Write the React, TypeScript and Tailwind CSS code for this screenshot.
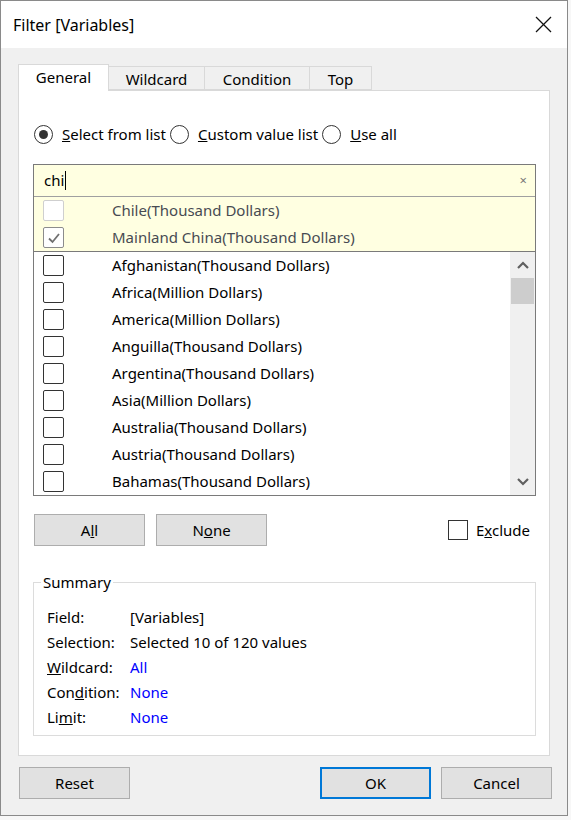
import React from 'react'

const font = { fontFamily: '"Noto Sans", "Segoe UI", sans-serif' }

const countries = [
  'Afghanistan(Thousand Dollars)',
  'Africa(Million Dollars)',
  'America(Million Dollars)',
  'Anguilla(Thousand Dollars)',
  'Argentina(Thousand Dollars)',
  'Asia(Million Dollars)',
  'Australia(Thousand Dollars)',
  'Austria(Thousand Dollars)',
  'Bahamas(Thousand Dollars)',
]

function Radio({ checked }: { checked?: boolean }) {
  return (
    <span className="w-[19px] h-[19px] rounded-full border border-[#333] bg-white flex items-center justify-center shrink-0">
      {checked && <span className="w-[9px] h-[9px] rounded-full bg-[#333]" />}
    </span>
  )
}

function Box({ tone = 'normal', checked }: { tone?: 'normal' | 'faint' | 'gray'; checked?: boolean }) {
  const border =
    tone === 'faint' ? 'border-[#cfcfcf]' : tone === 'gray' ? 'border-[#8c8c8c]' : 'border-[#333]'
  return (
    <span className={`w-[21px] h-[21px] rounded-[2px] border bg-white flex items-center justify-center shrink-0 ${border}`}>
      {checked && (
        <svg width="14" height="12" viewBox="0 0 14 12">
          <polyline points="2,6.5 5.5,10 12,2" fill="none" stroke="#707070" strokeWidth="1.8" />
        </svg>
      )}
    </span>
  )
}

function Btn({ children, primary, w = 'w-[111px]' }: { children: React.ReactNode; primary?: boolean; w?: string }) {
  return (
    <button
      className={`${w} h-[32px] bg-[#e1e1e1] text-[15px] text-black flex items-center justify-center ${
        primary ? 'border-2 border-[#0078d7]' : 'border border-[#adadad]'
      }`}
    >
      {children}
    </button>
  )
}

export default function App() {
  return (
    <div className="w-[571px] h-[820px] bg-[#f7f7f7] overflow-hidden" style={font}>
      <div className="w-[568px] h-[816px] border border-[#8a8a8a] bg-[#f0f0f0] flex flex-col text-black">

        {/* Title bar */}
        <div className="h-[47px] bg-white flex items-center justify-between pl-[12px] pr-[15px] shrink-0">
          <span className="text-[16px] leading-none">Filter [Variables]</span>
          <svg width="17" height="17" viewBox="0 0 17 17">
            <line x1="1" y1="1" x2="16" y2="16" stroke="#111" strokeWidth="1.2" />
            <line x1="16" y1="1" x2="1" y2="16" stroke="#111" strokeWidth="1.2" />
          </svg>
        </div>

        <div className="pl-[17px] pt-[16px] flex flex-col">
          {/* Tabs */}
          <div className="flex items-end h-[26px] relative z-10">
            <div className="w-[91px] h-[27px] bg-white border border-b-0 border-[#d9d9d9] flex items-center justify-center text-[15px] -mb-px pb-[1px]">
              General
            </div>
            <div className="w-[96px] h-[24px] bg-[#f0f0f0] border border-l-0 border-[#d9d9d9] flex items-center justify-center text-[15px] pt-[3px]">
              Wildcard
            </div>
            <div className="w-[105px] h-[24px] bg-[#f0f0f0] border border-l-0 border-[#d9d9d9] flex items-center justify-center text-[15px] pt-[3px]">
              Condition
            </div>
            <div className="w-[62px] h-[24px] bg-[#f0f0f0] border border-l-0 border-[#d9d9d9] flex items-center justify-center text-[15px] pt-[3px]">
              Top
            </div>
          </div>

          {/* Panel */}
          <div className="w-[532px] h-[666px] bg-white border border-[#d9d9d9] flex flex-col">
            {/* Radios */}
            <div className="flex items-center pl-[15px] mt-[34px] h-[19px] text-[15px]">
              <Radio checked />
              <span className="ml-[9px]"><span className="underline">S</span>elect from list</span>
              <span className="ml-[4px]"><Radio /></span>
              <span className="ml-[9px]"><span className="underline">C</span>ustom value list</span>
              <span className="ml-[4px]"><Radio /></span>
              <span className="ml-[9px]"><span className="underline">U</span>se all</span>
            </div>

            {/* List box */}
            <div className="ml-[14px] mt-[20px] w-[503px] h-[332px] border border-[#7a7a7a] flex flex-col overflow-hidden">
              <div className="h-[31px] bg-[#ffffe1] flex items-center justify-between pl-[10px] pr-[8px] shrink-0">
                <span className="text-[15px] flex items-center">chi<span className="w-px h-[19px] bg-black ml-px" /></span>
                <span className="text-[13px] text-[#777]">×</span>
              </div>
              <div className="border-t border-[#a0a0a0] bg-[#ffffe1] shrink-0">
                <div className="h-[27px] flex items-center">
                  <span className="w-[78px] pl-[9px]"><Box tone="faint" /></span>
                  <span className="text-[15px] text-[#474b52]">Chile(Thousand Dollars)</span>
                </div>
                <div className="h-[27px] flex items-center">
                  <span className="w-[78px] pl-[9px]"><Box tone="gray" checked /></span>
                  <span className="text-[15px] text-[#474b52]">Mainland China(Thousand Dollars)</span>
                </div>
              </div>
              <div className="border-t border-[#7a7a7a] flex flex-1 min-h-0">
                <div className="flex-1 overflow-hidden">
                  {countries.map((c) => (
                    <div key={c} className="h-[27px] flex items-center">
                      <span className="w-[78px] pl-[9px]"><Box /></span>
                      <span className="text-[15px]">{c}</span>
                    </div>
                  ))}
                </div>
                <div className="w-[25px] bg-[#f0f0f0] flex flex-col">
                  <div className="h-[26px] flex items-center justify-center">
                    <svg width="12" height="8" viewBox="0 0 12 8">
                      <polyline points="1,7 6,2 11,7" fill="none" stroke="#606060" strokeWidth="2.2" />
                    </svg>
                  </div>
                  <div className="h-[26px] mx-px bg-[#cdcdcd]" />
                  <div className="flex-1" />
                  <div className="h-[26px] flex items-center justify-center">
                    <svg width="12" height="8" viewBox="0 0 12 8">
                      <polyline points="1,1 6,6 11,1" fill="none" stroke="#606060" strokeWidth="2.2" />
                    </svg>
                  </div>
                </div>
              </div>
            </div>

            {/* All / None / Exclude */}
            <div className="flex items-center ml-[15px] mt-[18px] h-[32px]">
              <Btn>A<span className="underline">l</span>l</Btn>
              <span className="ml-[11px]"><Btn>N<span className="underline">o</span>ne</Btn></span>
              <span className="ml-auto mr-[19px] flex items-center text-[15px]">
                <span className="w-[20px] h-[20px] border border-[#333] bg-white" />
                <span className="ml-[8px]">E<span className="underline">x</span>clude</span>
              </span>
            </div>

            {/* Summary */}
            <fieldset className="ml-[14px] mt-[26px] w-[503px] h-[164px] border border-[#dcdcdc] px-0">
              <legend className="ml-[7px] px-[2px] text-[15px] leading-[20px]">Summary</legend>
              <div className="grid grid-cols-[83px_1fr] auto-rows-[25px] items-center text-[15px] mt-[13px] pl-[13px]">
                <span>Field:</span>
                <span>[Variables]</span>
                <span>Selection:</span>
                <span>Selected 10 of 120 values</span>
                <span><span className="underline">W</span>ildcard:</span>
                <span className="text-[#0000ff]">All</span>
                <span>Con<span className="underline">d</span>ition:</span>
                <span className="text-[#0000ff]">None</span>
                <span>Li<span className="underline">m</span>it:</span>
                <span className="text-[#0000ff]">None</span>
              </div>
            </fieldset>
          </div>

          {/* Footer */}
          <div className="flex items-center mt-[11px] pl-px pr-[15px]">
            <Btn>Reset</Btn>
            <span className="ml-auto"><Btn primary>OK</Btn></span>
            <span className="ml-[10px]"><Btn>Cancel</Btn></span>
          </div>
        </div>
      </div>
    </div>
  )
}
